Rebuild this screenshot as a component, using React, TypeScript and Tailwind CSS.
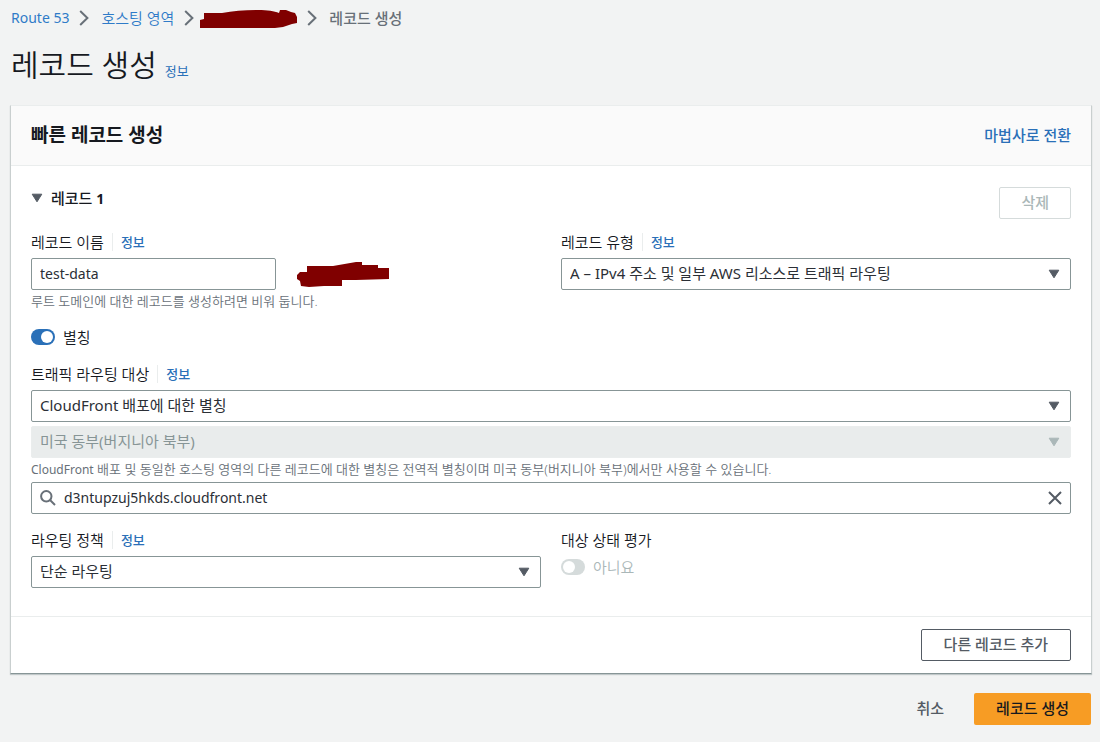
import { useState, type ReactNode, type SelectHTMLAttributes } from 'react';

function Chevron() {
  return (
    <svg aria-hidden="true" viewBox="0 0 10 16" className="h-4 w-2.5 shrink-0" fill="none" stroke="#687078" strokeWidth="2">
      <path d="M1.2 1 L8.4 8 L1.2 15" />
    </svg>
  );
}

function Caret({ className }: { className: string }) {
  return (
    <svg aria-hidden="true" viewBox="0 0 12 10" className={className} fill="currentColor" stroke="currentColor" strokeLinejoin="round">
      <path d="M1.2 1.2 H10.8 L6 8.8 Z" />
    </svg>
  );
}

function InfoLink({ divided = true }: { divided?: boolean }) {
  return (
    <a
      href="#info"
      className={
        divided
          ? 'border-l border-[#eaeded] pl-2 text-[13px] leading-[18px] font-medium text-[#2a70b8]'
          : 'text-[13px] leading-[18px] font-normal text-[#2a70b8]'
      }
    >
      정보
    </a>
  );
}

function FieldLabel({ htmlFor, children }: { htmlFor: string; children: ReactNode }) {
  return (
    <div className="flex h-8 items-center gap-2">
      <label htmlFor={htmlFor}>{children}</label>
      <InfoLink />
    </div>
  );
}

function Select({ options, ...rest }: { options: string[] } & SelectHTMLAttributes<HTMLSelectElement>) {
  return (
    <div className="relative">
      <select
        {...rest}
        className="block h-8 w-full appearance-none rounded-xs border border-[#879596] bg-white pr-10 pb-0.5 pl-2 text-[15px] leading-[22px] font-normal text-[#2b2f36] disabled:border-[#eaeded] disabled:bg-[#e9ecec] disabled:text-[#879596] disabled:opacity-100"
      >
        {options.map((option) => (
          <option key={option}>{option}</option>
        ))}
      </select>
      <Caret
        className={
          rest.disabled
            ? 'pointer-events-none absolute top-[11px] right-[11px] h-2.5 w-3 text-[#aab7b8]'
            : 'pointer-events-none absolute top-[11px] right-[11px] h-2.5 w-3 text-[#545b64]'
        }
      />
    </div>
  );
}

const switchClass =
  "relative h-4 w-6 shrink-0 appearance-none rounded-full bg-[#879596] before:absolute before:top-0.5 before:left-0.5 before:size-3 before:rounded-full before:bg-white before:content-[''] checked:bg-[#2a70b8] checked:before:left-2.5 disabled:bg-[#d5dbdb]";

export default function App() {
  const [name, setName] = useState('test-data');
  const [target, setTarget] = useState('d3ntupzuj5hkds.cloudfront.net');
  const [alias, setAlias] = useState(true);

  return (
    <div className="min-h-screen bg-[#f2f3f3] pt-[7px] pr-2 pb-4 pl-2.5 font-['Noto_Sans','Noto_Sans_CJK_KR',sans-serif] text-[15px] leading-[22px] font-[350] text-[#16191f]">
      <nav aria-label="경로">
        <ol className="flex items-center pl-px">
          <li className="flex items-center gap-2.5 pr-3">
            <a href="#route53" className="text-sm leading-[22px] font-normal text-[#2f7bc8]">Route 53</a>
            <Chevron />
          </li>
          <li className="flex items-center gap-2.5 pr-1.5">
            <a href="#zones" className="text-[#2f7bc8]">호스팅 영역</a>
            <Chevron />
          </li>
          <li className="flex items-center gap-2.5 pr-3">
            <svg aria-hidden="true" viewBox="0 0 97 19" className="h-[19px] w-[97px]" fill="#800000">
              <path d="M4 4 H22 C33 2 45 1 58 1 C68 1 74 2 79 4 L80 1 L86 1 L91 3 L95 4 L97 8 L97 14 L92 15 L83 18 L75 19 H0 V11 L4 10 Z" />
            </svg>
            <Chevron />
          </li>
          <li aria-current="page" className="font-medium text-[#687078]">레코드 생성</li>
        </ol>
      </nav>

      <header className="mt-[18px] flex items-baseline gap-2 pl-px">
        <h1 className="text-[30px] leading-9 font-[350]">레코드 생성</h1>
        <InfoLink divided={false} />
      </header>

      <main>
        <form onSubmit={(e) => e.preventDefault()}>
          <section className="mt-[22px] border border-t-[#eaeded] border-r-[#c9cfcf] border-b-[#879596] border-l-[#c9cfcf] bg-white shadow-[0_1px_1px_0_rgba(0,28,36,0.2)]">
            <div className="flex h-[60px] items-center justify-between border-b border-[#eaeded] bg-[#fafafa] px-5 pb-0.5">
              <h2 className="text-[19px] leading-7 font-bold">빠른 레코드 생성</h2>
              <a href="#wizard" className="font-medium text-[#2a70b8]">마법사로 전환</a>
            </div>

            <div className="px-5 pt-[21px] pb-7">
              <div className="flex items-start justify-between">
                <button type="button" aria-expanded="true" className="flex items-center gap-2 font-medium">
                  <Caret className="h-2.5 w-3 text-[#545b64]" />
                  <span>레코드 <span className="text-sm font-bold">1</span></span>
                </button>
                <button type="button" disabled className="h-8 rounded-xs border border-[#d5dbdb] px-[21px] pb-0.5 font-medium text-[#aab7b8]">
                  삭제
                </button>
              </div>

              <div className="mt-[7px] grid grid-cols-2 gap-5">
                <div>
                  <FieldLabel htmlFor="name">레코드 이름</FieldLabel>
                  <div className="flex items-center gap-5">
                    <input
                      id="name"
                      value={name}
                      onChange={(e) => setName(e.target.value)}
                      className="h-8 w-[245px] rounded-xs border border-[#879596] bg-white px-2 pb-0.5 text-sm font-normal text-[#2b2f36]"
                    />
                    <svg aria-hidden="true" viewBox="0 0 93 25" className="h-[25px] w-[93px]" fill="#800000">
                      <path d="M11 4 H37 L60 0 L66 0 V3 H82 V6 H93 V17 L60 18 L46 18 V24 H28 L13 25 L5 24 L4 19 L1 17 L1 13 L4 10 H11 Z" />
                    </svg>
                  </div>
                  <p className="text-[13px] leading-[22px] text-[#687078]">루트 도메인에 대한 레코드를 생성하려면 비워 둡니다.</p>
                </div>
                <div>
                  <FieldLabel htmlFor="type">레코드 유형</FieldLabel>
                  <Select id="type" options={['A – IPv4 주소 및 일부 AWS 리소스로 트래픽 라우팅']} />
                </div>
              </div>

              <label className="mt-3.5 flex w-fit items-center gap-2">
                <input
                  type="checkbox"
                  role="switch"
                  checked={alias}
                  onChange={(e) => setAlias(e.target.checked)}
                  className={switchClass}
                />
                별칭
              </label>

              <div className="mt-2.5">
                <FieldLabel htmlFor="endpoint">트래픽 라우팅 대상</FieldLabel>
                <div className="flex flex-col gap-1">
                  <Select id="endpoint" options={['CloudFront 배포에 대한 별칭']} />
                  <Select aria-label="리전" disabled options={['미국 동부(버지니아 북부)']} />
                </div>
                <p className="pb-0.5 text-[13px] leading-[22px] text-[#687078]">
                  <span className="text-xs leading-none font-normal">CloudFront</span> 배포 및 동일한 호스팅 영역의 다른 레코드에 대한 별칭은 전역적 별칭이며 미국 동부(버지니아 북부)에서만 사용할 수 있습니다.
                </p>
                <div className="flex h-8 items-center rounded-xs border border-[#879596] bg-white px-2">
                  <svg aria-hidden="true" viewBox="0 0 16 16" className="size-4 shrink-0" fill="none" stroke="#687078" strokeWidth="2">
                    <circle cx="6.3" cy="6.3" r="5.2" />
                    <path d="M10 10 L15 15" />
                  </svg>
                  <input
                    aria-label="배포 선택"
                    value={target}
                    onChange={(e) => setTarget(e.target.value)}
                    className="h-full min-w-0 flex-1 px-2 pb-0.5 text-sm font-normal text-[#2b2f36] outline-none"
                  />
                  <button type="button" aria-label="지우기" onClick={() => setTarget('')} className="shrink-0">
                    <svg aria-hidden="true" viewBox="0 0 14 14" className="size-3.5" fill="none" stroke="#545b64" strokeWidth="2">
                      <path d="M1 1 L13 13 M13 1 L1 13" />
                    </svg>
                  </button>
                </div>
              </div>

              <div className="mt-2.5 grid grid-cols-2 gap-5">
                <div>
                  <FieldLabel htmlFor="policy">라우팅 정책</FieldLabel>
                  <Select id="policy" options={['단순 라우팅']} />
                </div>
                <div>
                  <div className="flex h-8 items-center">대상 상태 평가</div>
                  <label className="flex w-fit items-center gap-2 text-[#aab7b8]">
                    <input type="checkbox" role="switch" aria-label="대상 상태 평가" disabled className={switchClass} />
                    아니요
                  </label>
                </div>
              </div>
            </div>

            <div className="flex justify-end border-t border-[#eaeded] px-5 py-3">
              <button type="button" className="h-8 rounded-xs border border-[#545b64] bg-white px-[22px] pb-0.5 font-medium text-[#545b64]">
                다른 레코드 추가
              </button>
            </div>
          </section>

          <div className="mt-[19px] mr-px flex justify-end gap-2">
            <button type="button" className="h-8 px-[22px] pb-0.5 font-medium text-[#545b64]">취소</button>
            <button type="submit" className="h-8 rounded-xs bg-[#f79c24] px-[22px] pb-0.5 font-medium text-[#16191f]">레코드 생성</button>
          </div>
        </form>
      </main>
    </div>
  );
}
